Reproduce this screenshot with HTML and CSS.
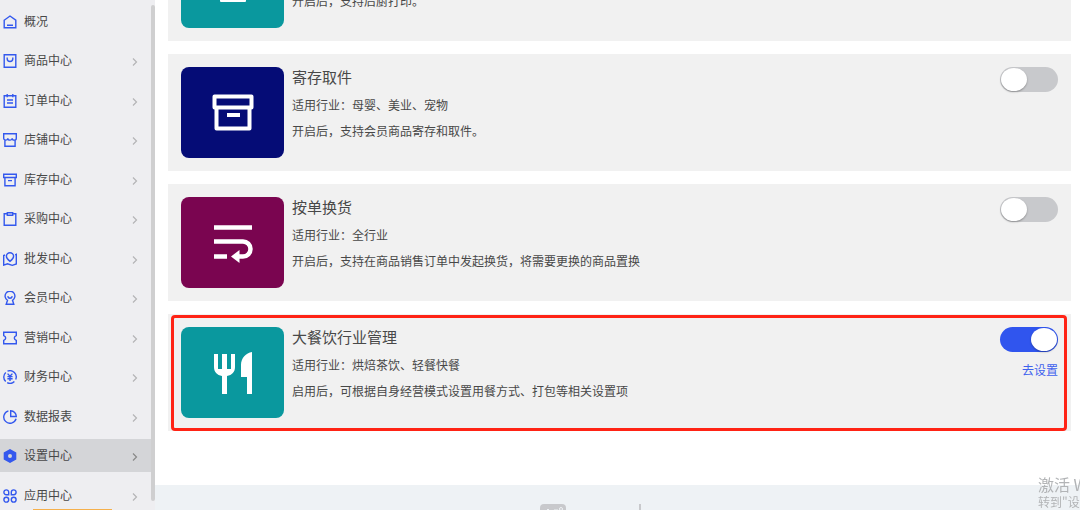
FILE: index.html
```html
<!DOCTYPE html>
<html lang="zh-CN">
<head>
    <meta charset="UTF-8">
    <meta name="viewport" content="width=device-width, initial-scale=1.0">
    <title>设置中心</title>
    <link rel="stylesheet" href="styles.css">
</head>
<body>
    <div class="layout">
        <!-- Sidebar -->
        <nav class="sidebar">
            <ul class="menu">
                <li><a href="#">
                    <svg class="icon" viewBox="0 0 14 14"><path d="M1.2 5.2 7 1l5.800 4.200v7.600H1.200zM4 10.200h6"/></svg>
                    <span>概况</span>
                </a></li>
                <li><a href="#">
                    <svg class="icon" viewBox="0 0 14 14"><path d="M1.200 .8h11.600v12.400H1.200zM4.200 3.500v1.200a2.800 2.800 0 0 0 5.600 0V3.500"/></svg>
                    <span>商品中心</span>
                    <svg class="arrow" viewBox="0 0 6 8"><path d="M1 .5 4.500 4 1 7.500"/></svg>
                </a></li>
                <li><a href="#">
                    <svg class="icon" viewBox="0 0 14 14"><path d="M1.200 1.800h11.600v11.500H1.200zM4.200 0v3.200M9.800 0v3.200M4 6h6M4 9h6"/></svg>
                    <span>订单中心</span>
                    <svg class="arrow" viewBox="0 0 6 8"><path d="M1 .5 4.500 4 1 7.500"/></svg>
                </a></li>
                <li><a href="#">
                    <svg class="icon" viewBox="0 0 14 14"><path d="M.7.8h12.600v4.400c0 1.200-.8 1.900-2 1.900S9.200 6.300 9.200 5.200c0 1.100-1 1.900-2.200 1.900S4.800 6.300 4.800 5.200c0 1.100-.9 1.900-2.100 1.900S.7 6.400.7 5.200zM1.900 7v6.300h10.200V7"/></svg>
                    <span>店铺中心</span>
                    <svg class="arrow" viewBox="0 0 6 8"><path d="M1 .5 4.500 4 1 7.500"/></svg>
                </a></li>
                <li><a href="#">
                    <svg class="icon" viewBox="0 0 14 14"><path d="M.7 1.300h12.600v3.200H.7zM1.900 4.500v8.300h10.200V4.500M5 7.600h4"/></svg>
                    <span>库存中心</span>
                    <svg class="arrow" viewBox="0 0 6 8"><path d="M1 .5 4.500 4 1 7.500"/></svg>
                </a></li>
                <li><a href="#">
                    <svg class="icon" viewBox="0 0 14 14"><path d="M4.300 1.800H1.200v11.500h11.600V1.800H9.700M4.300.7h5.400v2.600H4.300z"/></svg>
                    <span>采购中心</span>
                    <svg class="arrow" viewBox="0 0 6 8"><path d="M1 .5 4.500 4 1 7.500"/></svg>
                </a></li>
                <li><a href="#">
                    <svg class="icon" viewBox="0 0 14 14"><path d="M7 9.400C4.600 7.600 3.400 6 3.400 4.300a3.600 3.600 0 0 1 7.200 0C10.600 6 9.400 7.600 7 9.400zM2 3 .7 3.500v9.600l3.800-1.300 4.800 1.500 4-1.400V2.400l-1.200.5"/></svg>
                    <span>批发中心</span>
                    <svg class="arrow" viewBox="0 0 6 8"><path d="M1 .5 4.500 4 1 7.500"/></svg>
                </a></li>
                <li><a href="#">
                    <svg class="icon" viewBox="0 0 14 14"><path d="M4.500 9.300a4.900 4.900 0 1 1 5 0l1.300 4H3.200zM4.700 5.200c.4 1.400 1.200 2 2.300 2s1.900-.6 2.300-2"/></svg>
                    <span>会员中心</span>
                    <svg class="arrow" viewBox="0 0 6 8"><path d="M1 .5 4.500 4 1 7.500"/></svg>
                </a></li>
                <li><a href="#">
                    <svg class="icon" viewBox="0 0 14 14"><path d="M.7 1.300h12.600v3.300c-1.300.5-2 1.200-2 2.400s.7 1.900 2 2.400v3.300H.7V9.400c1.300-.5 2-1.200 2-2.400s-.7-1.900-2-2.400z"/></svg>
                    <span>营销中心</span>
                    <svg class="arrow" viewBox="0 0 6 8"><path d="M1 .5 4.500 4 1 7.500"/></svg>
                </a></li>
                <li><a href="#">
                    <svg class="icon" viewBox="0 0 14 14"><path d="M4.500 1.200a6.300 6.300 0 0 1 8.200 8.300M11.400 11.500a6.300 6.300 0 0 1-7.200 1.200M2.700 11.600A6.300 6.300 0 0 1 2.800 2.400M4.600 3.600 7 6.200l2.400-2.600M7 6.200v4.700M4.400 6.600h5.200M4.400 8.700h5.200"/></svg>
                    <span>财务中心</span>
                    <svg class="arrow" viewBox="0 0 6 8"><path d="M1 .5 4.500 4 1 7.500"/></svg>
                </a></li>
                <li><a href="#">
                    <svg class="icon" viewBox="0 0 14 14"><path d="M5.400.9a6.300 6.300 0 1 0 7.700 7.900M7.700.7v5.800h5.600A5.800 5.800 0 0 0 7.700.7z"/></svg>
                    <span>数据报表</span>
                    <svg class="arrow" viewBox="0 0 6 8"><path d="M1 .5 4.500 4 1 7.500"/></svg>
                </a></li>
                <li class="active"><a href="#">
                    <svg class="icon solid" viewBox="0 0 14 14"><path fill-rule="evenodd" d="M7 0l6.300 3.500v7L7 14 .7 10.500v-7zM7 5a2 2 0 1 0 0 4 2 2 0 0 0 0-4z"/></svg>
                    <span>设置中心</span>
                    <svg class="arrow" viewBox="0 0 6 8"><path d="M1 .5 4.500 4 1 7.500"/></svg>
                </a></li>
                <li><a href="#">
                    <svg class="icon" viewBox="0 0 14 14"><path d="M5.700 5.700H3.300a2.400 2.400 0 1 1 2.400-2.400zM8.300 5.700V3.300a2.400 2.400 0 1 1 2.400 2.400z"/><circle cx="3.300" cy="10.700" r="2.400"/><circle cx="10.700" cy="10.700" r="2.400"/></svg>
                    <span>应用中心</span>
                    <svg class="arrow" viewBox="0 0 6 8"><path d="M1 .5 4.500 4 1 7.500"/></svg>
                </a></li>
            </ul>
            <div class="scroll-track"><div class="scroll-thumb"></div></div>
            <div class="notice"></div>
        </nav>

        <main class="main">
            <section class="cards">
                <!-- scrolled under the top edge -->
                <article class="card card-cut">
                    <div class="tile teal">
                        <svg viewBox="0 0 48 48"><path d="M11 33h26v9a1 1 0 0 1-1 1H12a1 1 0 0 1-1-1z" fill="#fff"/></svg>
                    </div>
                    <div class="info">
                        <p>开启后，支持后厨打印。</p>
                    </div>
                </article>

                <article class="card">
                    <div class="tile navy">
                        <svg viewBox="0 0 48 48"><path d="M5.500 7.500h37v11h-37zM7.500 18.500v21h33v-21M18 26h13" fill="none" stroke="#fff" stroke-width="4" stroke-linejoin="round"/></svg>
                    </div>
                    <div class="info">
                        <h3>寄存取件</h3>
                        <p>适用行业：母婴、美业、宠物</p>
                        <p>开启后，支持会员商品寄存和取件。</p>
                    </div>
                    <div class="actions">
                        <input type="checkbox" class="switch" aria-label="寄存取件">
                    </div>
                </article>

                <article class="card">
                    <div class="tile plum">
                        <svg viewBox="0 0 48 48"><path d="M5 8.500h38M5 22.500h29a7 7 0 0 1 0 15h-6M5 37.500h13" fill="none" stroke="#fff" stroke-width="4.500"/><path d="M22 37.500 30.500 31v13z" fill="#fff"/></svg>
                    </div>
                    <div class="info">
                        <h3>按单换货</h3>
                        <p>适用行业：全行业</p>
                        <p>开启后，支持在商品销售订单中发起换货，将需要更换的商品置换</p>
                    </div>
                    <div class="actions">
                        <input type="checkbox" class="switch" aria-label="按单换货">
                    </div>
                </article>

                <article class="card marked">
                    <div class="tile teal">
                        <svg viewBox="0 0 48 48"><path d="M5 5h4v15h4V5h5v15h4V5h4v13c0 5-3 8-8 9v18h-5V27c-5-1-8-4-8-9zM43 3v42h-5V28h-6V16c0-7 5-12 11-13z" fill="#fff"/></svg>
                    </div>
                    <div class="info">
                        <h3>大餐饮行业管理</h3>
                        <p>适用行业：烘焙茶饮、轻餐快餐</p>
                        <p>启用后，可根据自身经营模式设置用餐方式、打包等相关设置项</p>
                    </div>
                    <div class="actions">
                        <input type="checkbox" class="switch" aria-label="大餐饮行业管理" checked>
                        <a href="#" class="setup">去设置</a>
                    </div>
                </article>
            </section>

            <footer class="footer">
                <svg class="footer-logo" viewBox="0 0 26 20"><rect width="26" height="20" rx="4" fill="#c8c9cc"/><path d="M6 7 8 5l2 2M14 6h4" fill="none" stroke="#eef2f5"/><circle cx="21" cy="5" r="1.500" fill="none" stroke="#eef2f5"/></svg>
                <span class="divider"></span>
            </footer>
        </main>
    </div>

    <div class="watermark">
        <p class="big">激活 Windows</p>
        <p>转到"设置"以激活 Windows。</p>
    </div>
</body>
</html>
```
FILE: styles.css
```css
* {
    box-sizing: border-box;
    margin: 0;
    padding: 0;
}

body {
    font-family: "Noto Sans CJK SC", sans-serif;
    font-size: 12px;
    color: #484848;
    background: #fff;
}

a {
    color: inherit;
    text-decoration: none;
}

.layout {
    display: flex;
    height: 100vh;
    overflow: hidden;
}

/* sidebar */
.sidebar {
    position: relative;
    display: flex;
    flex: 0 0 155px;
    padding-top: 5px;
    background: #eeeef1;
    overflow: hidden;
}

.menu {
    flex: 1;
    list-style: none;
}

.menu li {
    margin-bottom: 6px;
}

.menu li:nth-child(even) {
    margin-bottom: 7px;
}

.menu a {
    display: flex;
    align-items: center;
    gap: 7px;
    height: 33px;
    padding: 0 13px 0 3px;
}

.menu span {
    padding-bottom: 2px;
}

.menu .active {
    background: #d4d5d8;
}

.icon {
    width: 14px;
    height: 14px;
    fill: none;
    stroke: #3358ee;
    stroke-width: 1.4;
}

.icon.solid {
    fill: #3358ee;
    stroke: none;
}

.arrow {
    width: 6px;
    height: 8px;
    margin: 2px 0 0 auto;
    fill: none;
    stroke: #b4b4b6;
    stroke-width: 1.2;
}

.active .arrow {
    stroke: #888;
}

.scroll-track {
    width: 4px;
    padding-bottom: 9px;
}

.scroll-thumb {
    height: 100%;
    border-radius: 2px;
    background: #cfcfd0;
}

.notice {
    position: absolute;
    bottom: 0;
    left: 33px;
    width: 79px;
    height: 1px;
    background: #f5b04c;
}

/* content */
.main {
    display: flex;
    flex: 1;
    flex-direction: column;
    min-width: 0;
}

.cards {
    display: flex;
    flex-direction: column;
    gap: 13px;
    padding: 0 9px 54px 13px;
}

.card {
    position: relative;
    display: flex;
    gap: 8px;
    padding: 13px;
    background: #f1f1f1;
}

.card-cut {
    align-items: flex-end;
    height: 41px;
}

.card-cut .info {
    padding-bottom: 14px;
}

.marked::after {
    content: "";
    position: absolute;
    inset: 1px 4px 0 3px;
    border: 3px solid #ff2315;
    border-radius: 4px;
    pointer-events: none;
}

.tile {
    display: flex;
    flex: none;
    align-items: center;
    justify-content: center;
    width: 103px;
    height: 91px;
    border-radius: 8px;
}

.tile svg {
    width: 48px;
    height: 48px;
}

.teal {
    background: #0a989e;
}

.navy {
    background: #050c76;
}

.plum {
    background: #7a0550;
}

.info {
    flex: 1;
}

.info h3 {
    margin-bottom: 5px;
    font-size: 15px;
    font-weight: 400;
    line-height: 20px;
}

.info p,
.setup {
    line-height: 26px;
}

.actions {
    display: flex;
    flex-direction: column;
    align-items: flex-end;
    gap: 5px;
}

.switch {
    appearance: none;
    width: 58px;
    height: 25px;
    padding: 1px;
    border-radius: 13px;
    background: #c8c9cc;
    cursor: pointer;
}

.switch::before {
    content: "";
    display: block;
    width: 26px;
    height: 23px;
    border-radius: 50%;
    background: #fff;
    box-shadow: 0 1px 2px rgba(0, 0, 0, 0.3);
}

.switch:checked {
    background: #3055ee;
}

.switch:checked::before {
    margin-left: auto;
}

.setup {
    color: #3f62ee;
}

.footer {
    display: flex;
    flex: 1 0 auto;
    justify-content: center;
    gap: 73px;
    padding: 19px 54px 0 0;
    background: #eef2f5;
}

.footer-logo {
    width: 26px;
    height: 20px;
}

.divider {
    width: 2px;
    height: 20px;
    background: #c8c9cc;
}

.watermark {
    position: fixed;
    right: 0;
    bottom: 0;
    width: 42px;
    overflow: hidden;
    color: #b2b4b6;
    line-height: 16px;
    white-space: nowrap;
    pointer-events: none;
}

.watermark .big {
    font-size: 16px;
    line-height: 20px;
}
```
